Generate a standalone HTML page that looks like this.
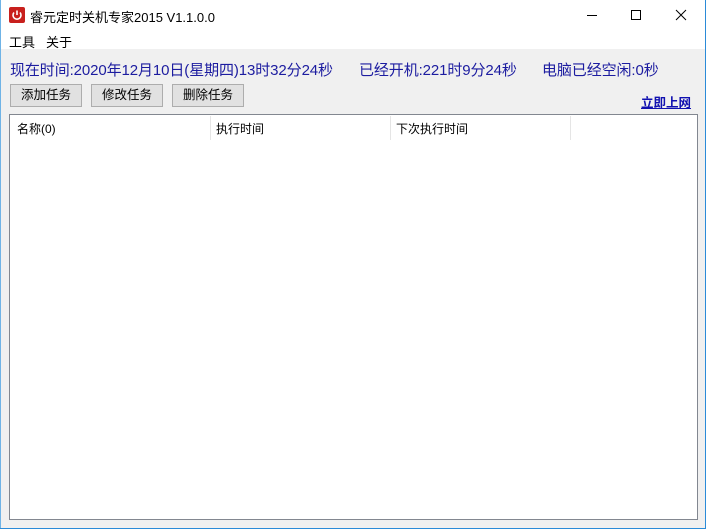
<!DOCTYPE html><html><head><meta charset="utf-8"><style>
*{margin:0;padding:0;box-sizing:border-box}
body{width:706px;height:529px;position:relative;overflow:hidden;background:#f0f0f0;font-family:"Liberation Sans","Microsoft YaHei","Noto Sans CJK SC",sans-serif;font-size:12px;color:#000}
.a{position:absolute;white-space:nowrap}
#tb{left:0;top:0;width:706px;height:49px;background:#fff}
.blue{color:#1c1ca0;font-size:15px;top:59px;letter-spacing:-0.1px}
.btn{top:84px;width:72px;height:23px;background:#e1e1e1;border:1px solid #adadad;text-align:center;line-height:21px;font-size:12.5px}
</style></head><body>
<div class="a" id="tb"></div>
<div class="a" style="left:9px;top:7px;width:16px;height:16px;background:#c8201d;border-radius:2px"><svg width="16" height="16"><path d="M5 5.5A4 4 0 1 0 11 5.5" stroke="#fff" stroke-width="1.6" fill="none"/><path d="M8 3.5V8" stroke="#fff" stroke-width="1.6"/></svg></div>
<div class="a" style="left:30px;top:7px;font-size:13px">睿元定时关机专家2015 V1.1.0.0</div>
<svg class="a" style="left:580px;top:8px" width="120" height="16"><path d="M7 7.5H17" stroke="#000"/><rect x="51.5" y="2.5" width="9" height="9" fill="none" stroke="#000"/><path d="M96 2L106 12M106 2L96 12" stroke="#000"/></svg>
<div class="a" style="left:9px;top:32px;font-size:13px">工具</div>
<div class="a" style="left:46px;top:32px;font-size:13px">关于</div>
<div class="a" style="left:0;top:0;width:1px;height:529px;background:#6fb3e6"></div>
<div class="a" style="right:0;top:0;width:1px;height:529px;background:#2b8bd8"></div>
<div class="a" style="left:0;bottom:0;width:706px;height:1px;background:#2b8bd8"></div>
<div class="a blue" style="left:10px">现在时间:2020年12月10日(星期四)13时32分24秒</div>
<div class="a blue" style="left:359px">已经开机:221时9分24秒</div>
<div class="a blue" style="left:542px">电脑已经空闲:0秒</div>
<div class="a btn" style="left:10px">添加任务</div>
<div class="a btn" style="left:91px">修改任务</div>
<div class="a btn" style="left:172px">删除任务</div>
<div class="a" style="left:641px;top:92px;color:#1010b0;font-weight:bold;text-decoration:underline;font-size:12.5px">立即上网</div>
<div class="a" style="left:9px;top:114px;width:689px;height:406px;background:#fff;border:1px solid #828790"></div>
<div class="a" style="left:210px;top:116px;width:1px;height:24px;background:#e5e5e5"></div>
<div class="a" style="left:390px;top:116px;width:1px;height:24px;background:#e5e5e5"></div>
<div class="a" style="left:570px;top:116px;width:1px;height:24px;background:#e5e5e5"></div>
<div class="a" style="left:17px;top:120px">名称(0)</div>
<div class="a" style="left:216px;top:120px">执行时间</div>
<div class="a" style="left:396px;top:120px">下次执行时间</div>
</body></html>
